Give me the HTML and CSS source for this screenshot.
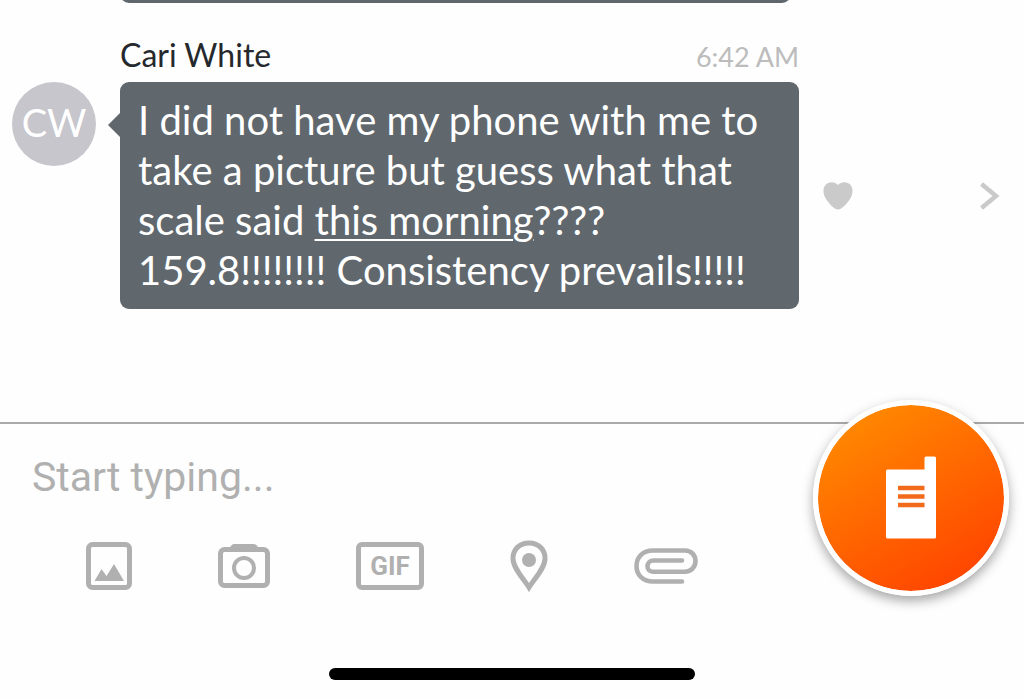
FILE: index.html
```html
<!DOCTYPE html>
<html lang="en">
<head>
    <meta charset="UTF-8">
    <meta name="viewport" content="width=device-width, initial-scale=1.0">
    <title>Chat</title>
    <link rel="stylesheet" href="styles.css">
</head>
<body>
    <main class="messages">
        <div class="bubble-end"></div>

        <article class="message">
            <header class="message-header">
                <h2 class="sender">Cari White</h2>
                <time class="time" datetime="06:42">6:42 AM</time>
            </header>
            <div class="avatar">CW</div>
            <div class="bubble">I did not have my phone with me to take a picture but guess what that scale said <a href="#">this morning</a>????<br>159.8!!!!!!!! Consistency prevails!!!!!</div>
            <div class="actions">
                <button type="button" class="icon-button" aria-label="Like">
                    <svg width="30" height="28" viewBox="0 0 30 28">
                        <path fill="#cacaca" d="M15 3C11.500-.8 5.500-.5 2.500 3C-.5 6.500 0 12.500 3 17C6 21.500 11 27.500 15 27.500S24 21.500 27 17C30 12.500 30.500 6.500 27.500 3C24.500-.5 18.500-.8 15 3Z"/>
                    </svg>
                </button>
                <button type="button" class="icon-button" aria-label="Details">
                    <svg width="20" height="28" viewBox="0 0 20 28">
                        <path fill="none" stroke="#cacaca" stroke-width="4.500" d="M1.500 2L16 14L1.500 26"/>
                    </svg>
                </button>
            </div>
        </article>
    </main>

    <footer class="composer">
        <input type="text" class="composer-input" placeholder="Start typing..." aria-label="Message">

        <div class="toolbar">
            <button type="button" class="icon-button" aria-label="Add image">
                <svg width="46" height="48" viewBox="0 0 46 48">
                    <rect x="2.500" y="2.500" width="41" height="43" rx="4" fill="none" stroke="#b0b0b0" stroke-width="5"/>
                    <path fill="#b0b0b0" d="M8.500 39L15.500 27L20.500 34L28 22L38 39Z"/>
                </svg>
            </button>
            <button type="button" class="icon-button" aria-label="Take photo">
                <svg width="52" height="46" viewBox="0 0 52 46">
                    <path fill="#b0b0b0" d="M12 6C12 3 14 1 17 1H35C38 1 40 3 40 6Z"/>
                    <rect x="2.500" y="6.500" width="47" height="36" rx="4" fill="none" stroke="#b0b0b0" stroke-width="5"/>
                    <circle cx="26" cy="25" r="10" fill="none" stroke="#b0b0b0" stroke-width="4"/>
                </svg>
            </button>
            <button type="button" class="icon-button gif-button">GIF</button>
            <button type="button" class="icon-button" aria-label="Share location">
                <svg width="38" height="52" viewBox="0 0 38 52">
                    <path fill="none" stroke="#b0b0b0" stroke-width="5" d="M19 47.500C13 38 3 28 3 18.500C3 9 10 3 19 3S35 9 35 18.500C35 28 25 38 19 47.500Z"/>
                    <circle cx="19" cy="20" r="7" fill="#b0b0b0"/>
                </svg>
            </button>
            <button type="button" class="icon-button" aria-label="Attach file">
                <svg width="64" height="36" viewBox="0 0 64 36">
                    <path fill="none" stroke="#b0b0b0" stroke-width="4.600" stroke-linecap="round" d="M48 33.500H19C9 33.500 2.500 27 2.500 18S9 2.500 19 2.500H51C57 2.500 61.500 7 61.500 13S57 23.700 51 23.700H19C15.500 23.700 13.500 21.500 13.500 18.500S15.500 12.500 19 12.500H48"/>
                </svg>
            </button>
        </div>

        <div class="home-bar"></div>

        <button type="button" class="talk-button" aria-label="Push to talk">
            <svg width="50" height="84" viewBox="0 0 50 84">
                <path fill="#fff" d="M1.500 13.500H38.500V2Q38.500 .5 40 .5H48.500Q50 .5 50 2V81Q50 82.500 48.500 82.500H1.500Q0 82.500 0 81V15Q0 13.500 1.500 13.500Z"/>
                <path stroke="#f26a1b" stroke-width="4.500" d="M12 32H38.500M12 40.500H38.500M12 49H38.500"/>
            </svg>
        </button>
    </footer>
</body>
</html>
```

FILE: styles.css
```css
* {
    box-sizing: border-box;
}
body {
    display: flex;
    flex-direction: column;
    min-height: 100vh;
    margin: 0;
    background-color: #fefefe;
    font-family: Lato, sans-serif;
}
button {
    cursor: pointer;
}
.messages {
    flex: 1;
    overflow: hidden;
}
/* only the bottom edge of the previous message is in view */
.bubble-end {
    height: 20px;
    margin: -17px 233px 0 120px;
    border-radius: 9px;
    background-color: #60686e;
}
.message {
    display: grid;
    grid-template-columns: 84px 1fr 177px;
    column-gap: 24px;
    padding: 31px 24px 0 12px;
}
.message-header {
    grid-column: 2;
    display: flex;
    justify-content: space-between;
    align-items: baseline;
    height: 48px;
    line-height: 42px;
}
.sender {
    margin: 0;
    font-size: 32px;
    font-weight: normal;
    color: #25282c;
}
.time {
    font-size: 27px;
    color: #bcbcbc;
}
.avatar {
    grid-column: 1;
    width: 84px;
    height: 84px;
    border-radius: 50%;
    background-color: #c7c6cd;
    color: white;
    font-size: 38px;
    line-height: 80px;
    text-align: center;
}
.bubble {
    position: relative;
    padding: 13px 18px 14px;
    border-radius: 9px;
    background-color: #60686e;
    color: white;
    font-size: 40px;
    line-height: 50px;
}
.bubble::before {
    content: "";
    position: absolute;
    left: -12px;
    top: 31px;
    border: 12px solid transparent;
    border-left-width: 0;
    border-right-color: #60686e;
}
.bubble a {
    color: inherit;
    text-decoration-thickness: 2px;
    text-underline-offset: 4px;
}
.actions {
    display: flex;
    justify-content: space-between;
    align-items: center;
}
.icon-button {
    display: block;
    padding: 0;
    border: none;
    background: none;
}
.icon-button svg {
    display: block;
}
.composer {
    position: relative;
    padding: 28px 0 19px;
    border-top: 2px solid #aaa;
}
.composer-input {
    display: block;
    width: 75%;
    height: 50px;
    padding: 0 32px;
    border: none;
    outline: none;
    background: none;
    font-family: Roboto, sans-serif;
    font-size: 41px;
}
.composer-input::placeholder {
    color: #b0b0b0;
}
.toolbar {
    display: flex;
    align-items: center;
    gap: 86px;
    padding: 38px 86px 0;
}
.gif-button {
    width: 68px;
    height: 48px;
    border: 5px solid #b0b0b0;
    border-radius: 6px;
    color: #b0b0b0;
    font-family: Roboto, sans-serif;
    font-size: 26px;
    font-weight: bold;
}
.home-bar {
    width: 366px;
    height: 12px;
    margin: 76px auto 0;
    border-radius: 6px;
    background-color: black;
}
.talk-button {
    position: absolute;
    top: -24px;
    right: 15px;
    display: flex;
    justify-content: center;
    align-items: center;
    width: 196px;
    height: 196px;
    border: 5px solid white;
    border-radius: 50%;
    background: linear-gradient(150deg, #ff8500 15%, #ff4800 85%) padding-box;
    box-shadow: 0 5px 12px rgba(0, 0, 0, 0.35);
}
```
